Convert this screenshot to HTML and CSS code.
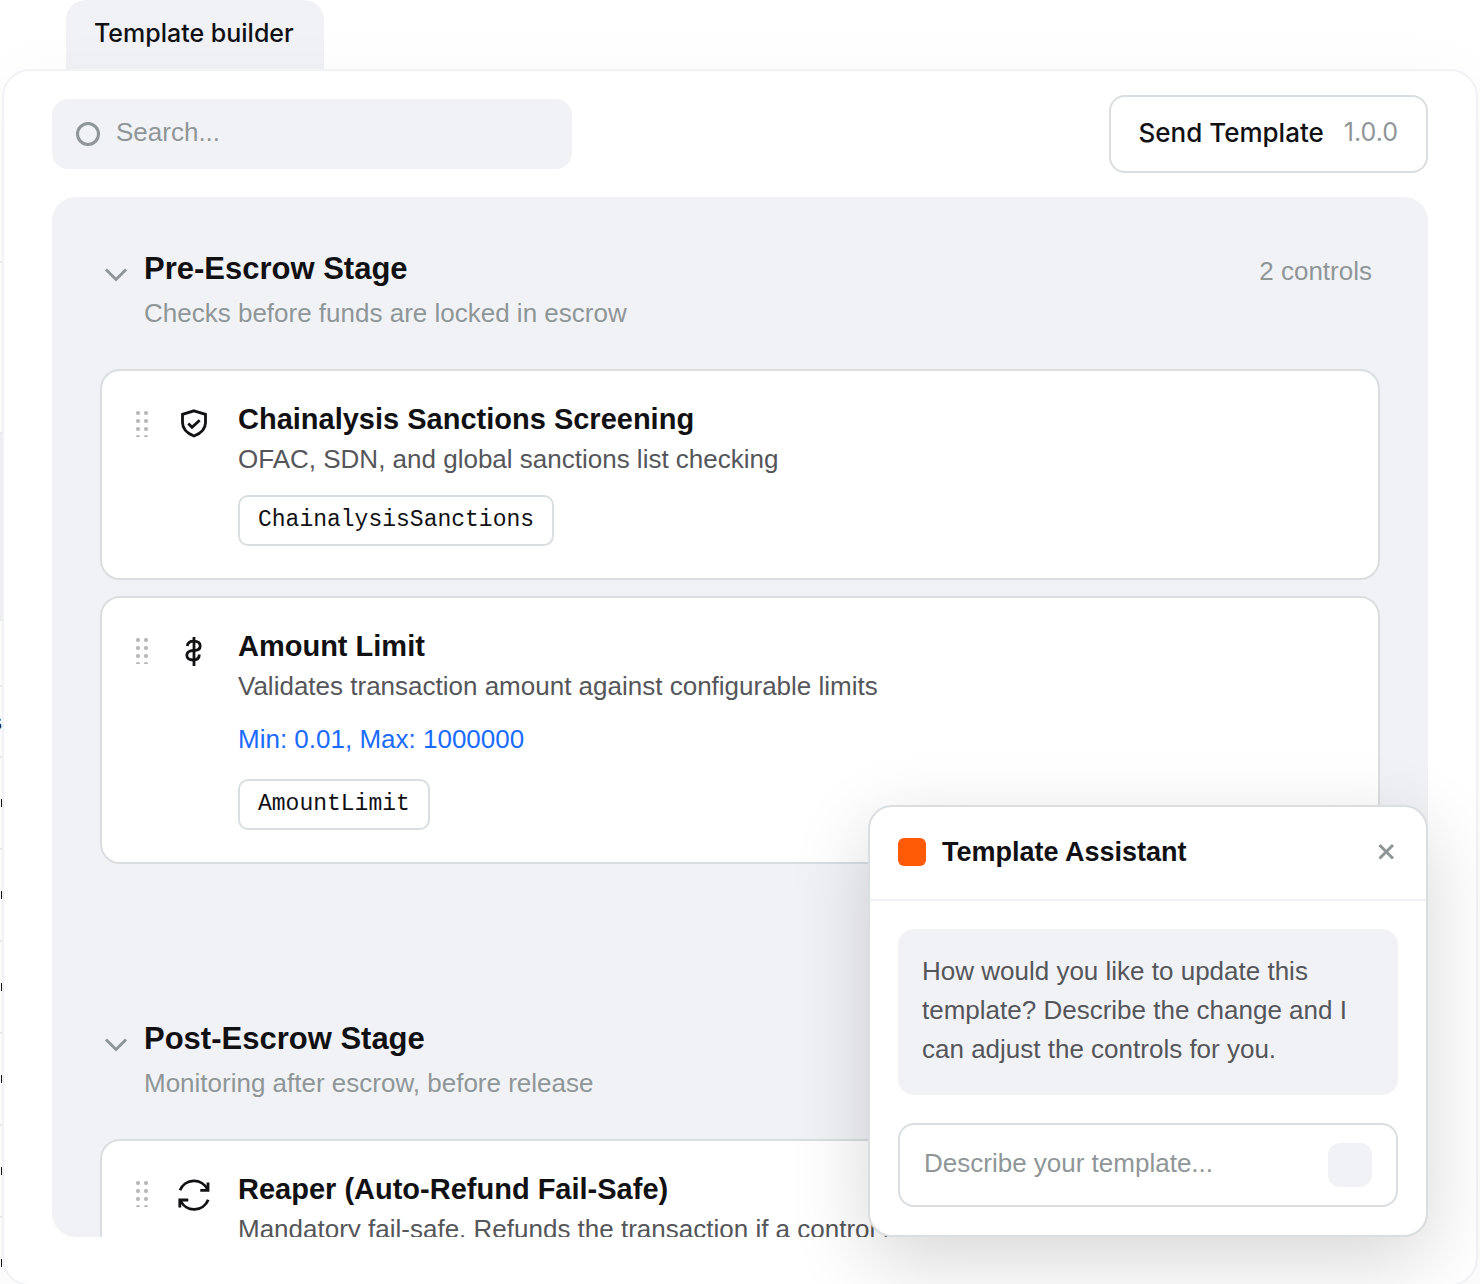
FILE: index.html
```html
<!DOCTYPE html>
<html lang="en">
<head>
<meta charset="utf-8">
<meta name="viewport" content="width=device-width, initial-scale=1">
<title>Template builder</title>
<link rel="stylesheet" href="styles.css">
</head>
<body>
<div class="underlay" aria-hidden="true">
  <div class="u-row u-top"></div>
  <div class="u-row u-intro"></div>
  <div class="u-row u-band"></div>
  <div class="u-row u-tools"></div>
  <div class="u-row u-head">s</div>
  <div class="u-row u-item"><i></i></div>
  <div class="u-row u-item"><i></i></div>
  <div class="u-row u-item"><i></i></div>
  <div class="u-row u-item"><i></i></div>
  <div class="u-row u-item"><i></i></div>
  <div class="u-row u-item"><i></i></div>
</div>

<div class="page">
  <h1 class="tab">Template builder</h1>
  <main class="panel">
    <div class="toolbar">
      <label class="search">
        <span class="search-icon"></span>
        <input type="search" placeholder="Search..." aria-label="Search controls">
      </label>
      <button class="send" type="button">Send Template <span class="version">1.0.0</span></button>
    </div>

    <div class="workspace">
      <div class="canvas">
        <section class="stage">
          <header class="stage-head">
            <svg class="chevron" viewBox="0 0 24 48" aria-hidden="true"><path d="M2 24.500 12 34.500 22 24.500"/></svg>
            <div class="stage-text">
              <h2>Pre-Escrow Stage</h2>
              <p>Checks before funds are locked in escrow</p>
            </div>
            <span class="count">2 controls</span>
          </header>
          <article class="card">
            <span class="handle"></span>
            <svg class="icon" viewBox="0 0 32 32" aria-hidden="true"><path d="M16 3.800 27.500 7.300V15.500C27.500 22 22.500 26.500 16 29 9.500 26.500 4.500 22 4.500 15.500V7.300Z"/><path d="M10.300 16.500 14 20.200 21.700 13.200"/></svg>
            <div class="card-body">
              <h3>Chainalysis Sanctions Screening</h3>
              <p class="desc">OFAC, SDN, and global sanctions list checking</p>
              <code class="tag">ChainalysisSanctions</code>
            </div>
          </article>
          <article class="card">
            <span class="handle"></span>
            <svg class="icon" viewBox="0 0 32 32" aria-hidden="true"><path d="M16 3V32"/><path d="M9.200 12C9.800 9 12 7.200 15.500 7.200 19.500 7.200 22.200 9 22.200 12 22.200 15 19.500 16.500 15.500 16.500 11 16.500 8.800 18.500 8.800 21.300 8.800 24.300 11.500 26 15 26 19 26 21.300 24 21.300 20.500"/></svg>
            <div class="card-body">
              <h3>Amount Limit</h3>
              <p class="desc">Validates transaction amount against configurable limits</p>
              <a class="params" href="#amount-limit">Min: 0.01, Max: 1000000</a>
              <code class="tag">AmountLimit</code>
            </div>
          </article>
        </section>

        <section class="stage">
          <header class="stage-head">
            <svg class="chevron" viewBox="0 0 24 48" aria-hidden="true"><path d="M2 24.500 12 34.500 22 24.500"/></svg>
            <div class="stage-text">
              <h2>Post-Escrow Stage</h2>
              <p>Monitoring after escrow, before release</p>
            </div>
          </header>
          <article class="card">
            <span class="handle"></span>
            <svg class="icon" viewBox="0 0 32 32" aria-hidden="true"><path d="M2 13.300A15 15 0 0 1 29.500 12.500"/><path d="M30 5.500V13.300H22.300"/><path d="M30.200 22.700A15 15 0 0 1 2.500 23.500"/><path d="M1.800 30.500V23H10.300"/></svg>
            <div class="card-body">
              <h3>Reaper (Auto-Refund Fail-Safe)</h3>
              <p class="desc">Mandatory fail-safe. Refunds the transaction if a control fails</p>
            </div>
          </article>
        </section>
      </div>

      <aside class="assistant">
        <header class="assistant-head">
          <span class="logo"></span>
          <h2>Template Assistant</h2>
          <button class="close" type="button" aria-label="Close"><svg viewBox="0 0 24 24" aria-hidden="true"><path d="M5.500 5 19 18.500M19 5 5.500 18.500"/></svg></button>
        </header>
        <div class="assistant-body">
          <p class="bubble">How would you like to update this template? Describe the change and I can adjust the controls for you.</p>
          <form class="prompt">
            <input type="text" placeholder="Describe your template..." aria-label="Describe your template">
            <button type="button" aria-label="Send"></button>
          </form>
        </div>
      </aside>
    </div>
  </main>
</div>
</body>
</html>
```
FILE: styles.css
```css
:root {
  --ink: #111114;
  --text: #55565a;
  --muted: #8f9698;
  --surface: #f1f2f6;
  --line: #d9dee1;
  --blue: #1a6bff;
  --orange: #ff5a05;
  --sans: "Liberation Sans", Arial, sans-serif;
  --medium: Inter, "Liberation Sans", sans-serif;
  --mono: "Liberation Mono", monospace;
}

* { box-sizing: border-box; }

body {
  margin: 0;
  overflow: hidden;
  background: #fff;
  color: var(--ink);
  font: 400 26px/40px var(--sans);
}

h1, h2, h3, p { margin: 0; }

button, input {
  font: inherit;
  color: inherit;
  border: 0;
  padding: 0;
  background: none;
}

svg {
  fill: none;
  stroke: currentColor;
  overflow: visible;
  flex: none;
}

/* Page that stays behind the builder; only its edge shows */
.underlay {
  position: absolute;
  inset: 0 auto 0 0;
  width: 2px;
  overflow: hidden;
}
.u-row {
  display: flex;
  align-items: center;
  border-bottom: 2px solid #ededf0;
}
.u-top { height: 263px; }
.u-intro { height: 171px; }
.u-band { height: 187px; background: var(--surface); }
.u-tools { height: 66px; }
.u-head {
  height: 71px;
  justify-content: flex-end;
  font-weight: 700;
  font-size: 23px;
}
.u-item { height: 92px; }
.u-item i {
  width: 1px;
  height: 8px;
  margin-left: 1px;
  background: var(--ink);
}

.page {
  position: relative;
  display: flex;
  flex-direction: column;
  align-items: flex-start;
  height: 100vh;
  padding: 0 2px;
}

.tab {
  margin-left: 64px;
  padding: 14px 30px 16px 28px;
  border-radius: 20px 20px 0 0;
  background: var(--surface);
  font: 500 25px/39px var(--medium);
}

.panel {
  position: relative;
  display: flex;
  flex-direction: column;
  gap: 24px;
  flex: 1;
  align-self: stretch;
  min-height: 0;
  margin-bottom: -2px;
  padding: 24px 48px 47px;
  border: 2px solid var(--surface);
  border-radius: 28px;
  background: #fff;
  box-shadow: 0 16px 80px rgba(0, 0, 0, 0.04);
}

.toolbar {
  display: flex;
  align-items: center;
  justify-content: space-between;
}

.search {
  display: flex;
  align-items: center;
  gap: 16px;
  width: 520px;
  height: 70px;
  padding: 0 24px;
  border-radius: 16px;
  background: var(--surface);
}
.search-icon {
  width: 24px;
  height: 24px;
  border: 3px solid var(--muted);
  border-radius: 50%;
}
.search input {
  flex: 1;
  min-width: 0;
  height: 40px;
  padding-bottom: 4px;
  outline: 0;
}
input::placeholder { color: var(--muted); opacity: 1; }

.send {
  display: flex;
  gap: 20px;
  padding: 16px 28px 19px;
  border: 2px solid var(--line);
  border-radius: 16px;
  font: 500 26px/39px var(--medium);
}
.version {
  color: var(--muted);
  font-size: 25px;
  font-weight: 400;
}

.workspace {
  position: relative;
  flex: 1;
  min-height: 0;
}

.canvas {
  height: 100%;
  overflow: hidden;
  padding: 48px;
  border-radius: 24px;
  background: var(--surface);
}

.stage + .stage { margin-top: 151px; }

.stage-head {
  display: flex;
  gap: 16px;
  padding: 0 8px 0 4px;
  margin-bottom: 36px;
  color: var(--muted);
}
.stage-text { flex: 1; }
.stage-head h2 {
  color: var(--ink);
  font-size: 31px;
  line-height: 48px;
}
.chevron {
  width: 24px;
  height: 48px;
  stroke-width: 3;
}
.count { line-height: 52px; }

.card {
  display: flex;
  gap: 28px;
  padding: 32px;
  border: 2px solid var(--line);
  border-radius: 20px;
  background: #fff;
}
.card + .card { margin-top: 16px; }

.handle {
  flex: none;
  width: 16px;
  height: 28px;
  margin-top: 6px;
  background: radial-gradient(circle, #b8b8ba 0 1.5px, transparent 2.5px) 0 0 / 8px 8px;
}
.icon {
  width: 32px;
  height: 32px;
  margin-top: 4px;
  stroke-width: 2.8;
}

.card-body {
  display: flex;
  flex-direction: column;
  align-items: flex-start;
}
.card h3 {
  font-size: 29px;
  line-height: 32px;
  margin-bottom: 4px;
}
.desc { color: var(--text); }
.params {
  margin: 13px 0 4px;
  color: var(--blue);
  text-decoration: none;
}
.tag {
  margin-top: 16px;
  padding: 8px 18px;
  border: 2px solid var(--line);
  border-radius: 10px;
  font: 23px/31px var(--mono);
}

.assistant {
  position: absolute;
  right: 0;
  bottom: 0;
  width: 560px;
  border: 2px solid var(--line);
  border-radius: 24px;
  background: #fff;
  box-shadow: 0 24px 80px rgba(0, 0, 0, 0.16);
}
.assistant-head {
  display: flex;
  align-items: center;
  gap: 16px;
  padding: 25px 28px 27px;
  border-bottom: 2px solid var(--surface);
}
.assistant-head h2 {
  flex: 1;
  font-size: 27px;
}
.logo {
  width: 28px;
  height: 28px;
  border-radius: 6px;
  background: var(--orange);
}
.close {
  display: flex;
  color: var(--muted);
}
.close svg {
  width: 24px;
  height: 24px;
  stroke-width: 3;
}

.assistant-body {
  display: grid;
  gap: 28px;
  padding: 28px;
}
.bubble {
  padding: 23px 24px 26px;
  border-radius: 16px;
  background: var(--surface);
  color: var(--text);
  line-height: 39px;
}
.prompt {
  display: flex;
  align-items: center;
  gap: 16px;
  height: 84px;
  padding: 0 24px;
  border: 2px solid var(--line);
  border-radius: 16px;
}
.prompt input {
  flex: 1;
  min-width: 0;
  height: 40px;
  padding-bottom: 4px;
  outline: 0;
}
.prompt button {
  width: 44px;
  height: 44px;
  border-radius: 12px;
  background: var(--surface);
}
```
